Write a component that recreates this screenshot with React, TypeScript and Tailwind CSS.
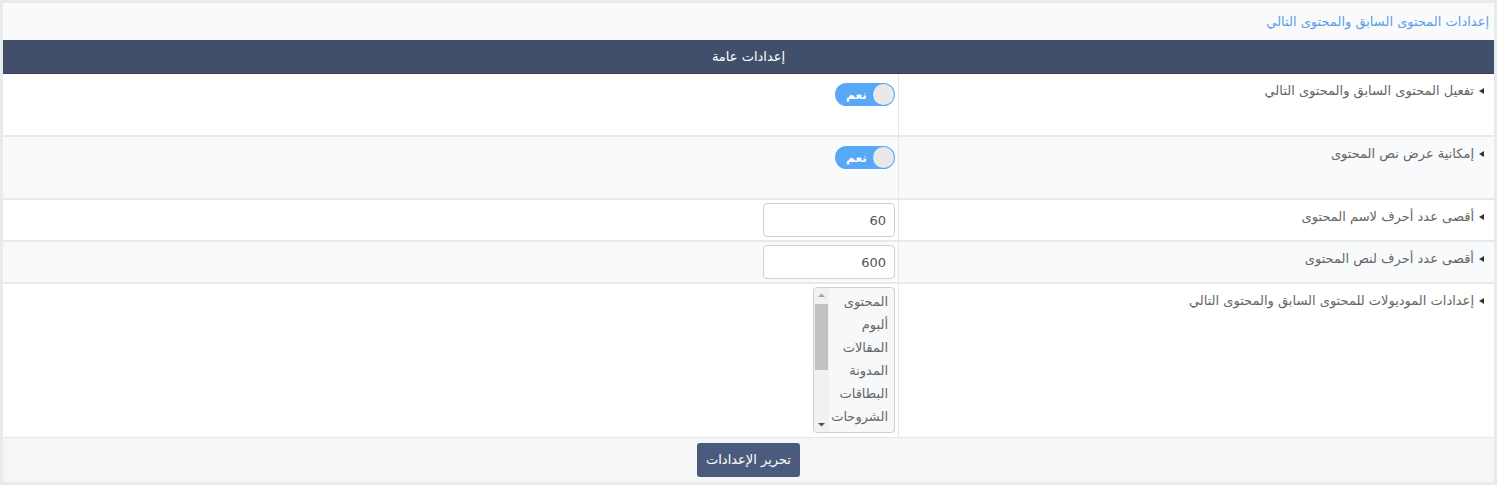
import React, { useState } from 'react';

const modules = ['المحتوى', 'ألبوم', 'المقالات', 'المدونة', 'البطاقات', 'الشروحات'];

const Toggle = ({ on, onChange }: { on: boolean; onChange: () => void }) => (
  <button
    type="button"
    onClick={onChange}
    className={`mt-[5px] flex h-[23px] w-[60px] items-center justify-between rounded-full px-[1px] ${on ? 'bg-[#58a8f8]' : 'bg-[#d5d9de]'}`}
  >
    <span className="h-[21px] w-[21px] rounded-full bg-[#e9e9e9]" />
    <span className="pl-[10px] text-[12px] font-bold leading-none text-white">{on ? 'نعم' : 'لا'}</span>
  </button>
);

const Label = ({ children }: { children: React.ReactNode }) => (
  <div className="flex w-[596px] shrink-0 items-start gap-[5px] border-l border-[#e6e6e6] pr-[10px] pt-[7px] text-[13px] leading-[20px] text-[#666]">
    <svg width="5" height="20" viewBox="0 0 5 20" className="shrink-0">
      <path d="M0 10 L5 7 L5 13 Z" fill="#333" />
    </svg>
    <span>{children}</span>
  </div>
);

const ModuleList = () => {
  const [selected, setSelected] = useState<string[]>([]);
  return (
    <div className="flex h-[146px] w-[82px] overflow-hidden rounded-[4px] border border-[#cfcfcf] bg-[#f7f8fa]">
      <div className="flex-1 pr-[6px] pt-[2px] text-[13px] leading-[23px] text-[#666]">
        {modules.map((m) => (
          <div
            key={m}
            onClick={() => setSelected((s) => (s.includes(m) ? s.filter((x) => x !== m) : [...s, m]))}
            className={`cursor-default whitespace-nowrap ${selected.includes(m) ? 'bg-[#cfd6e2]' : ''}`}
          >
            {m}
          </div>
        ))}
      </div>
      {/* scrollbar */}
      <div className="flex w-[15px] shrink-0 flex-col items-center bg-[#f1f1f1]">
        <svg width="15" height="14" viewBox="0 0 15 14">
          <path d="M4 9 L7.5 5.5 L11 9 Z" fill="#a3a3a3" />
        </svg>
        <div className="mt-[2px] h-[66px] w-[13px] bg-[#c1c1c1]" />
        <div className="flex-1" />
        <svg width="15" height="14" viewBox="0 0 15 14">
          <path d="M4 5 L7.5 8.5 L11 5 Z" fill="#505050" />
        </svg>
      </div>
    </div>
  );
};

export default function App() {
  const [prevNext, setPrevNext] = useState(true);
  const [showText, setShowText] = useState(true);
  const [nameMax, setNameMax] = useState('60');
  const [textMax, setTextMax] = useState('600');

  return (
    <div
      dir="rtl"
      className="h-[485px] w-[1497px] border-[3px] border-[#e8eaec] bg-white"
      style={{ fontFamily: '"DejaVu Sans", sans-serif' }}
    >
      {/* Title */}
      <div className="flex h-[37px] items-center bg-[#f9fafc] pr-[5px] text-[13px] text-[#5f9de6]">
        إعدادات المحتوى السابق والمحتوى التالي
      </div>

      {/* Section header */}
      <div className="flex h-[34px] items-center justify-center border-b border-[#34405a] bg-[#414f6b] text-[13px] text-white">
        إعدادات عامة
      </div>

      {/* Row 1 */}
      <div className="flex h-[63px] border-b-2 border-[#e9e9e9] bg-white">
        <Label>تفعيل المحتوى السابق والمحتوى التالي</Label>
        <div className="flex-1 pr-[3px] pt-[4px]">
          <Toggle on={prevNext} onChange={() => setPrevNext(!prevNext)} />
        </div>
      </div>

      {/* Row 2 */}
      <div className="flex h-[63px] border-b-2 border-[#e9e9e9] bg-[#f9fafb]">
        <Label>إمكانية عرض نص المحتوى</Label>
        <div className="flex-1 pr-[3px] pt-[4px]">
          <Toggle on={showText} onChange={() => setShowText(!showText)} />
        </div>
      </div>

      {/* Row 3 */}
      <div className="flex h-[42px] border-b-2 border-[#e9e9e9] bg-white">
        <Label>أقصى عدد أحرف لاسم المحتوى</Label>
        <div className="flex-1 pr-[3px] pt-[3px]">
          <input
            value={nameMax}
            onChange={(e) => setNameMax(e.target.value)}
            className="h-[34px] w-[132px] rounded-[4px] border border-[#cfcfcf] bg-white px-[8px] text-right text-[13px] text-[#555] outline-none"
            style={{ fontFamily: '"DejaVu Sans", sans-serif' }}
          />
        </div>
      </div>

      {/* Row 4 */}
      <div className="flex h-[42px] border-b-2 border-[#e9e9e9] bg-[#f9fafb]">
        <Label>أقصى عدد أحرف لنص المحتوى</Label>
        <div className="flex-1 pr-[3px] pt-[3px]">
          <input
            value={textMax}
            onChange={(e) => setTextMax(e.target.value)}
            className="h-[34px] w-[132px] rounded-[4px] border border-[#cfcfcf] bg-white px-[8px] text-right text-[13px] text-[#555] outline-none"
            style={{ fontFamily: '"DejaVu Sans", sans-serif' }}
          />
        </div>
      </div>

      {/* Row 5 */}
      <div className="flex h-[153px] bg-white">
        <Label>إعدادات الموديولات للمحتوى السابق والمحتوى التالي</Label>
        <div className="flex-1 pr-[3px] pt-[3px]">
          <ModuleList />
        </div>
      </div>

      {/* Footer */}
      <div className="flex h-[45px] items-center justify-center border-t border-[#e6e6e6] bg-[#f5f6f8]">
        <button
          type="button"
          className="h-[34px] w-[103px] rounded-[3px] bg-[#4b5b7e] text-[13px] text-white"
        >
          تحرير الإعدادات
        </button>
      </div>
    </div>
  );
}
